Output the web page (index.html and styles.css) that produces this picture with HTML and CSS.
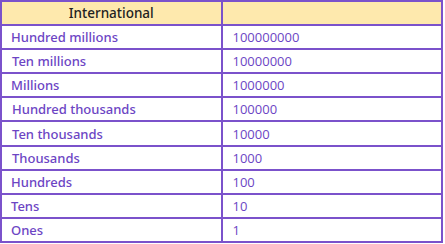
FILE: index.html
```html
<!DOCTYPE html>
<html>
<head>
<meta charset="utf-8">
<link rel="stylesheet" href="styles.css">
</head>
<body>
<table class="place-table">
  <thead>
    <tr><th class="head">International</th><th class="head"></th></tr>
  </thead>
  <tbody>
    <tr><td class="name">Hundred millions</td><td class="num">100000000</td></tr>
    <tr><td class="name shift">Ten millions</td><td class="num">10000000</td></tr>
    <tr><td class="name">Millions</td><td class="num">1000000</td></tr>
    <tr><td class="name shift">Hundred thousands</td><td class="num">100000</td></tr>
    <tr><td class="name shift">Ten thousands</td><td class="num">10000</td></tr>
    <tr><td class="name shift">Thousands</td><td class="num">1000</td></tr>
    <tr><td class="name">Hundreds</td><td class="num">100</td></tr>
    <tr><td class="name">Tens</td><td class="num">10</td></tr>
    <tr><td class="name">Ones</td><td class="num">1</td></tr>
  </tbody>
</table>
</body>
</html>
```
FILE: styles.css
```css
html, body {
  margin: 0;
  padding: 0;
  background: #ffffff;
}
.place-table {
  border-collapse: collapse;
  width: 443px;
  table-layout: fixed;
  font-family: "Noto Sans", "Open Sans", sans-serif;
  font-size: 13px;
}
.place-table th,
.place-table td {
  border: 2px solid #7b52cb;
  height: 22.1px;
  padding: 0;
  box-sizing: content-box;
  line-height: 18px;
}
.head {
  background: #fee9ad;
  color: #222222;
  font-weight: 500;
  font-size: 13.5px;
  text-align: center;
}
.name {
  color: #6c45c4;
  font-weight: 500;
  padding-left: 9px !important;
  text-align: left;
}
.name.shift {
  padding-left: 10px !important;
}
.num {
  color: #6c45c4;
  font-family: "Open Sans", sans-serif;
  font-weight: 400;
  padding-left: 10px !important;
  text-align: left;
}
```
